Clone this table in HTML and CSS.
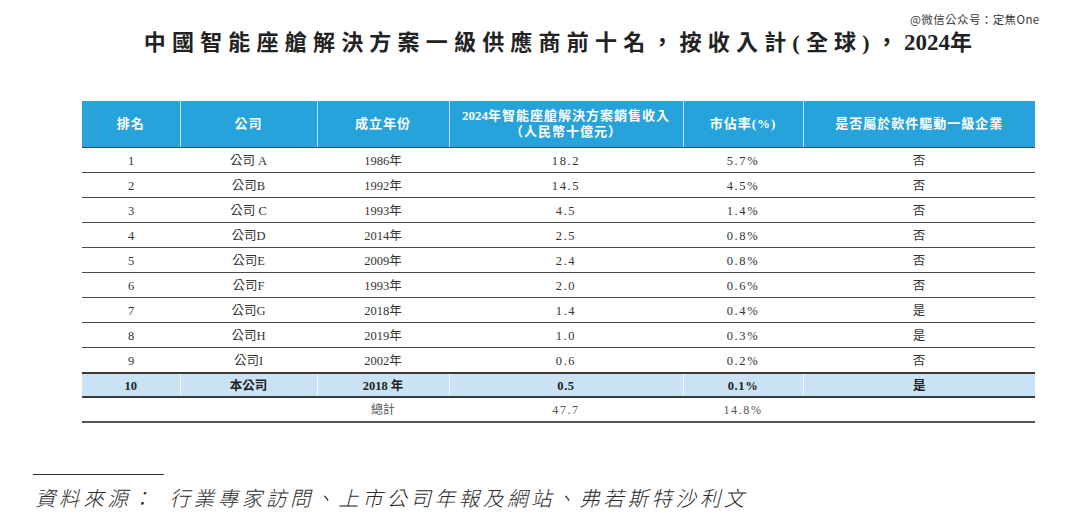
FILE: index.html
```html
<!DOCTYPE html>
<html lang="zh-Hant">
<head>
<meta charset="utf-8">
<link rel="stylesheet" href="styles.css">
</head>
<body>
<div class="page">
  <div class="watermark">@微信公众号：定焦One</div>
  <h1 class="title">中國智能座艙解決方案一級供應商前十名，按收入計(全球)，<span class="yr">2024</span>年</h1>
  <table class="tbl">
    <colgroup>
      <col style="width:98px"><col style="width:137px"><col style="width:132px"><col style="width:234px"><col style="width:120px"><col style="width:232px">
    </colgroup>
    <thead>
      <tr>
        <th>排名</th>
        <th>公司</th>
        <th>成立年份</th>
        <th><span class="yr2">2024</span>年智能座艙解決方案銷售收入<br>（人民幣十億元）</th>
        <th>市佔率(%)</th>
        <th>是否屬於軟件驅動一級企業</th>
      </tr>
    </thead>
    <tbody>
      <tr><td>1</td><td>公司 A</td><td>1986年</td><td class="num">18.2</td><td class="num">5.7%</td><td>否</td></tr>
      <tr><td>2</td><td>公司B</td><td>1992年</td><td class="num">14.5</td><td class="num">4.5%</td><td>否</td></tr>
      <tr><td>3</td><td>公司 C</td><td>1993年</td><td class="num">4.5</td><td class="num">1.4%</td><td>否</td></tr>
      <tr><td>4</td><td>公司D</td><td>2014年</td><td class="num">2.5</td><td class="num">0.8%</td><td>否</td></tr>
      <tr><td>5</td><td>公司E</td><td>2009年</td><td class="num">2.4</td><td class="num">0.8%</td><td>否</td></tr>
      <tr><td>6</td><td>公司F</td><td>1993年</td><td class="num">2.0</td><td class="num">0.6%</td><td>否</td></tr>
      <tr><td>7</td><td>公司G</td><td>2018年</td><td class="num">1.4</td><td class="num">0.4%</td><td>是</td></tr>
      <tr><td>8</td><td>公司H</td><td>2019年</td><td class="num">1.0</td><td class="num">0.3%</td><td>是</td></tr>
      <tr><td>9</td><td>公司I</td><td>2002年</td><td class="num">0.6</td><td class="num">0.2%</td><td>否</td></tr>
      <tr class="hl"><td>10</td><td>本公司</td><td>2018 年</td><td class="num">0.5</td><td class="num">0.1%</td><td>是</td></tr>
      <tr class="total"><td></td><td></td><td>總計</td><td class="num">47.7</td><td class="num">14.8%</td><td></td></tr>
    </tbody>
  </table>
  <div class="rule"></div>
  <p class="source">資料來源：<span class="gap"></span>行業專家訪問、上市公司年報及網站、弗若斯特沙利文</p>
</div>
</body>
</html>
```

FILE: styles.css
```css
html, body {
  margin: 0;
  padding: 0;
  background: #ffffff;
}

body {
  width: 1080px;
  height: 524px;
  overflow: hidden;
  font-family: "Liberation Serif", "Noto Sans CJK TC", serif;
  color: #333333;
}

.page {
  position: relative;
  width: 1080px;
  height: 524px;
}

.watermark {
  position: absolute;
  top: 12px;
  left: 910px;
  font-family: "Noto Sans CJK SC", sans-serif;
  font-size: 11.5px;
  line-height: 14px;
  color: #3a3a3a;
  letter-spacing: 0.4px;
}

.title {
  margin: 0;
  height: 101px;
  box-sizing: border-box;
  padding-top: 30px;
  padding-left: 42px;
  text-align: center;
  font-size: 22px;
  line-height: 26px;
  font-weight: 700;
  letter-spacing: 6.2px;
  color: #222222;
  font-family: "Liberation Serif", "Noto Sans CJK TC", serif;
}

.title .yr {
  letter-spacing: 0;
  font-size: 23px;
}

.tbl {
  margin-left: 82px;
  width: 953px;
  border-collapse: collapse;
  table-layout: fixed;
}

.tbl th {
  background: #27a3dc;
  color: #ffffff;
  height: 46px;
  padding: 0;
  font-size: 13px;
  line-height: 16px;
  font-weight: 700;
  letter-spacing: 1px;
  border-left: 1px solid #c4e5f6;
  border-bottom: 1px solid #3d4a55;
  text-align: center;
  vertical-align: middle;
}

.tbl th:first-child {
  border-left: none;
}

.tbl th .yr2 {
  letter-spacing: 0;
}

.tbl td {
  height: 23px;
  padding: 1px 0 0;
  font-size: 12.5px;
  line-height: 16px;
  text-align: center;
  vertical-align: middle;
  border-bottom: 1px solid #4a4a4a;
  color: #333333;
}

.tbl td.num {
  letter-spacing: 1.6px;
}

.tbl tr.hl td {
  background: #c9e2f4;
  font-weight: 700;
  color: #222222;
  border-top: 2px solid #3a3a3a;
  border-bottom: 2px solid #3a3a3a;
  border-left: 1px solid #f2f8fc;
  height: 21px;
}

.tbl tr.hl td:first-child {
  border-left: none;
}

.tbl tr.hl td.num {
  letter-spacing: 0.6px;
}

.tbl tr.total td {
  color: #555555;
  font-size: 12px;
  border-bottom: 2px solid #555555;
  height: 22px;
}

.rule {
  margin-top: 51px;
  margin-left: 33px;
  width: 131px;
  border-top: 1px solid #333333;
}

.source {
  margin: 10px 0 0 35px;
  font-family: "Noto Sans CJK TC", sans-serif;
  font-style: italic;
  font-weight: 300;
  font-size: 20.5px;
  line-height: 24px;
  letter-spacing: 3.6px;
  color: #2a2a2a;
}

.source .gap {
  display: inline-block;
  width: 14px;
}
```
